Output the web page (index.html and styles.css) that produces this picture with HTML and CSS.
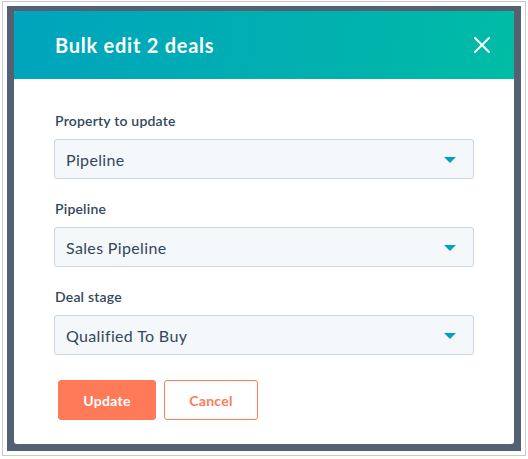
FILE: index.html
```html
<!DOCTYPE html>
<html>
<head>
<meta charset="utf-8">
<link rel="stylesheet" href="styles.css">
</head>
<body>
<div class="frame">
  <div class="backdrop">
    <div class="modal">
      <div class="modal-header">
        <h1 class="title">Bulk edit 2 deals</h1>
        <button class="close" aria-label="Close">
          <svg width="16" height="16" viewBox="0 0 16 16"><path d="M1 1 L15 15 M15 1 L1 15" stroke="#fff" stroke-width="2" stroke-linecap="square" fill="none"/></svg>
        </button>
      </div>
      <div class="modal-body">
        <div class="field">
          <label class="label">Property to update</label>
          <div class="select"><span>Pipeline</span><span class="caret"></span></div>
        </div>
        <div class="field">
          <label class="label">Pipeline</label>
          <div class="select"><span>Sales Pipeline</span><span class="caret"></span></div>
        </div>
        <div class="field">
          <label class="label">Deal stage</label>
          <div class="select"><span>Qualified To Buy</span><span class="caret"></span></div>
        </div>
        <div class="actions">
          <button class="btn btn-primary">Update</button>
          <button class="btn btn-secondary">Cancel</button>
        </div>
      </div>
    </div>
  </div>
</div>
</body>
</html>
```
FILE: styles.css
```css
html, body {
  margin: 0;
  padding: 0;
  background: #fff;
}
body {
  font-family: Lato, "Liberation Sans", sans-serif;
  color: #33475b;
}
.frame {
  box-sizing: border-box;
  margin: 1px 0 0 2px;
  width: 524px;
  height: 455px;
  border: 1px solid #c9cbcd;
  padding: 4px;
  background: #fff;
}
.backdrop {
  box-sizing: border-box;
  width: 514px;
  height: 445px;
  background: #536273;
  padding: 5px 7px 7px 7px;
}
.modal {
  width: 500px;
  height: 433px;
  background: #fff;
  border-radius: 3px;
  overflow: hidden;
  display: flex;
  flex-direction: column;
}
.modal-header {
  height: 68px;
  flex: none;
  background: linear-gradient(100deg, #00a4bd 0%, #00b3ad 70%, #00bda5 100%);
  display: flex;
  align-items: center;
  justify-content: space-between;
  padding: 0 24px 0 41px;
}
.title {
  margin: 0;
  color: #fff;
  font-size: 20px;
  font-weight: 700;
  line-height: 24px;
  letter-spacing: 0.75px;
}
.close {
  background: none;
  border: 0;
  padding: 0;
  width: 16px;
  height: 16px;
  display: block;
  cursor: pointer;
}
.close svg { display: block; }
.modal-body {
  padding: 32px 40px 0 40px;
  display: flex;
  flex-direction: column;
}
.field {
  display: flex;
  flex-direction: column;
  margin-bottom: 20px;
}
.field:nth-child(3) { margin-bottom: 25px; }
.label {
  font-size: 14px;
  font-weight: 600;
  line-height: 20px;
  margin: 0 0 8px 1px;
  color: #33475b;
  letter-spacing: 0.2px;
}
.select {
  box-sizing: border-box;
  height: 40px;
  background: #f5f8fa;
  border: 1px solid #cbd6e2;
  border-radius: 3px;
  display: flex;
  align-items: center;
  justify-content: space-between;
  padding: 0 17px 0 11px;
  font-size: 16px;
  color: #33475b;
  letter-spacing: 0.35px;
}
.caret {
  width: 0;
  height: 0;
  border-left: 6px solid transparent;
  border-right: 6px solid transparent;
  border-top: 6px solid #00a4bd;
  margin-top: 1px;
}
.actions {
  display: flex;
  gap: 8px;
  margin-left: 4px;
}
.btn {
  box-sizing: border-box;
  height: 40px;
  border-radius: 3px;
  font-family: Lato, "Liberation Sans", sans-serif;
  font-size: 14px;
  font-weight: 700;
  border: 1px solid #ff7a59;
  padding: 0;
  cursor: pointer;
  letter-spacing: 0.3px;
}
.btn-primary {
  width: 98px;
  background: #ff7a59;
  color: #fff;
}
.btn-secondary {
  width: 94px;
  background: #fff;
  color: #ff7a59;
}
```
